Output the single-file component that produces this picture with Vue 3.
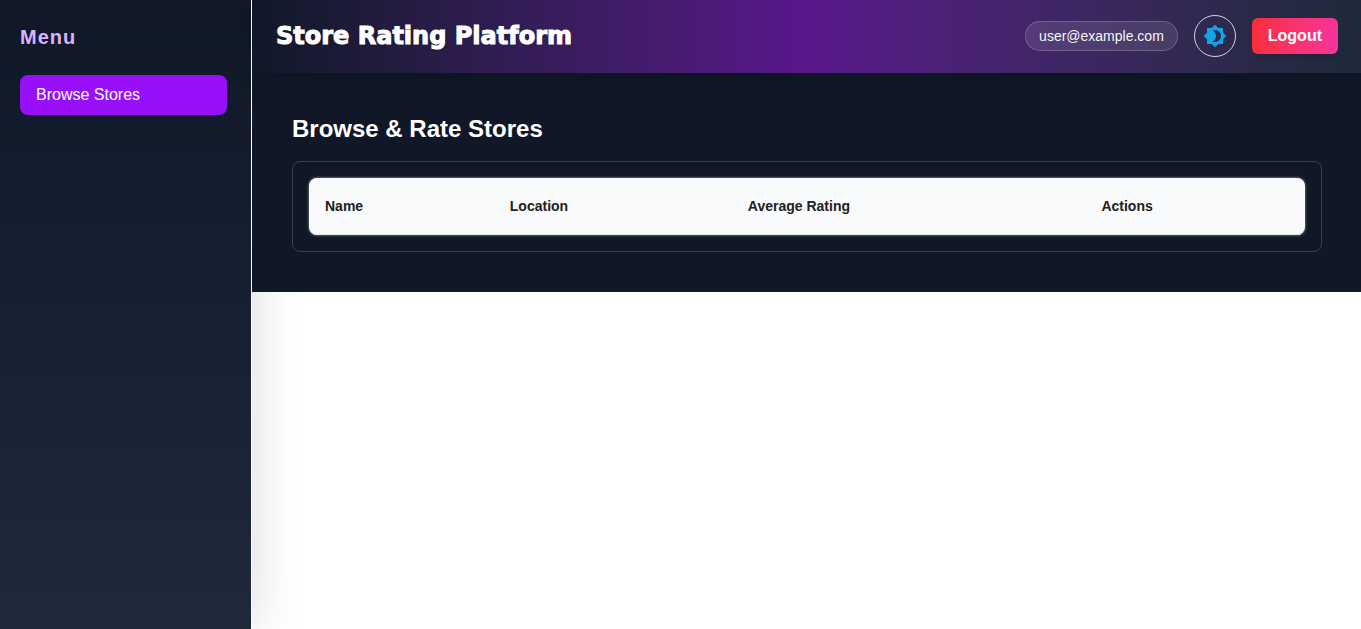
<script setup>
const menuItems = ['Browse Stores']
const columns = ['Name', 'Location', 'Average Rating', 'Actions']
</script>

<template>
  <div class="layout">
    <aside class="sidebar">
      <h2 class="menu-title">Menu</h2>
      <nav>
        <button v-for="item in menuItems" :key="item" type="button" class="menu-item">{{ item }}</button>
      </nav>
    </aside>
    <div class="content">
      <header class="topbar">
        <h1 class="brand">Store Rating Platform</h1>
        <div class="actions">
          <span class="user">user@example.com</span>
          <button type="button" class="theme" aria-label="Toggle theme">
            <svg viewBox="0 0 24 24" width="24" height="24" aria-hidden="true">
              <path fill="currentColor" d="M20 8.69V4h-4.69L12 .69 8.69 4H4v4.69L.69 12 4 15.31V20h4.69L12 23.31 15.31 20H20v-4.69L23.31 12 20 8.69zM12 18c-.89 0-1.74-.2-2.5-.55C11.56 16.5 13 14.42 13 12s-1.44-4.5-3.5-5.45C10.26 6.2 11.11 6 12 6c3.31 0 6 2.69 6 6s-2.69 6-6 6z" />
            </svg>
          </button>
          <button type="button" class="logout">Logout</button>
        </div>
      </header>
      <main class="page">
        <h2 class="page-title">Browse &amp; Rate Stores</h2>
        <section class="card">
          <div class="table-wrap">
            <table class="stores">
              <thead>
                <tr>
                  <th v-for="column in columns" :key="column" scope="col">{{ column }}</th>
                </tr>
              </thead>
            </table>
          </div>
        </section>
      </main>
    </div>
  </div>
</template>

<style>
body {
  background: #fff;
}
</style>

<style scoped>
.layout {
  display: flex;
  min-height: 100vh;
  font-family: "Liberation Sans", Arial, sans-serif;
  font-size: 16px;
  line-height: 24px;
  color: #fff;
}
.layout * {
  box-sizing: border-box;
}
h1,
h2 {
  margin: 0;
}
button {
  font: inherit;
  color: inherit;
  border: 0;
  cursor: pointer;
}
.sidebar {
  flex: 0 0 252px;
  padding: 23px 24px 20px 20px;
  border-right: 1px solid #fff;
  background: linear-gradient(to bottom in oklab, #101828, #1e2939);
  box-shadow: 0 0 50px rgba(0, 0, 0, 0.15);
}
.menu-title {
  margin-bottom: 24px;
  font-size: 20px;
  line-height: 28px;
  font-weight: 700;
  letter-spacing: 1px;
  color: #dab2ff;
}
.menu-item {
  display: block;
  width: 100%;
  padding: 8px 16px;
  border-radius: 8px;
  background: #9810fa;
  text-align: left;
}
.content {
  flex: 1;
  min-width: 0;
}
.topbar {
  position: relative;
  display: flex;
  align-items: center;
  justify-content: space-between;
  padding: 15px 23px 16px 24px;
  background: linear-gradient(to right in oklab, #101828, #59168b, #1e2939);
  box-shadow: 0 10px 15px -3px rgba(0, 0, 0, 0.1), 0 4px 6px -4px rgba(0, 0, 0, 0.1);
}
.brand {
  font-family: "Arial Black", "DejaVu Sans", sans-serif;
  font-size: 24px;
  line-height: 34px;
  font-weight: 900;
  -webkit-text-stroke: 1px #fff;
  text-shadow: 0 1px 2px rgba(0, 0, 0, 0.2);
}
.actions {
  display: flex;
  align-items: center;
  gap: 16px;
}
.user {
  padding: 4px 13px;
  border: 1px solid rgba(255, 255, 255, 0.2);
  border-radius: 15px;
  background: rgba(255, 255, 255, 0.1);
  font-size: 14px;
  line-height: 20px;
  color: #f3f4f6;
}
.theme {
  display: flex;
  align-items: center;
  justify-content: center;
  width: 42px;
  height: 42px;
  padding: 0;
  border: 1px solid #d1d5dc;
  border-radius: 50%;
  background: transparent;
  color: #0ea5e9;
}
.logout {
  padding: 6px 16px;
  border-radius: 6px;
  background: linear-gradient(to right in oklab, #fb2c36, #f6339a);
  box-shadow: 0 4px 6px -1px rgba(0, 0, 0, 0.1), 0 2px 4px -2px rgba(0, 0, 0, 0.1);
  font-weight: 700;
}
.page {
  padding: 40px 39px 40px 40px;
  background: #101828;
}
.page-title {
  margin-bottom: 16px;
  font-size: 24px;
  line-height: 32px;
  font-weight: 700;
}
.card {
  padding: 16px;
  border: 1px solid #364153;
  border-radius: 8px;
}
.table-wrap {
  overflow: hidden;
  border-radius: 8px;
  background: #f9fafb;
  box-shadow: 0 0 3px rgba(255, 255, 255, 0.6);
}
.stores {
  width: 100%;
  border-collapse: separate;
  border-spacing: 0;
  font-size: 14px;
  line-height: 24px;
  color: #212121;
}
.stores th {
  padding: 16px;
  border-bottom: 1px solid #e0e0e0;
  text-align: left;
  font-weight: 700;
}
</style>
